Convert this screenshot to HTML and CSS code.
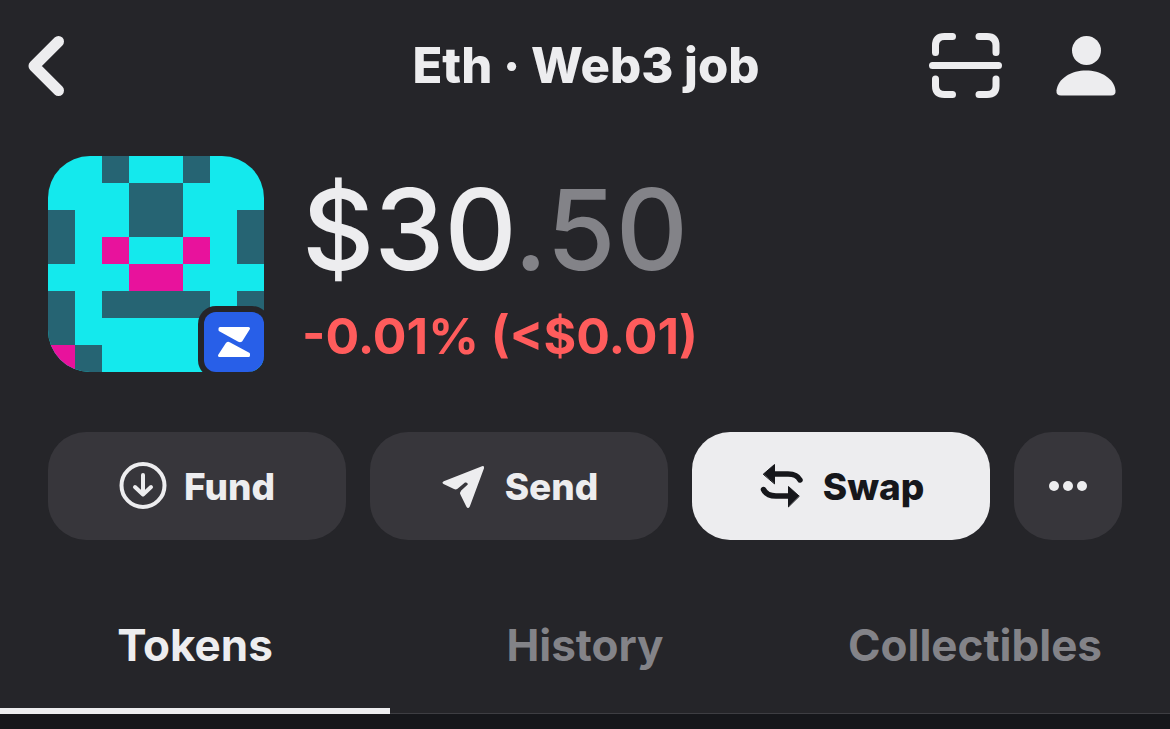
FILE: index.html
```html
<!DOCTYPE html>
<html lang="en">
<head>
    <meta charset="UTF-8">
    <meta name="viewport" content="width=device-width, initial-scale=1.0">
    <title>Eth · Web3 job</title>
    <link rel="stylesheet" href="styles.css">
</head>
<body>
    <main class="wallet">
        <header class="topbar">
            <button type="button" class="icon-button" aria-label="Back">
                <svg width="36" height="60" viewBox="0 0 36 60" fill="none" stroke="currentColor" stroke-width="11" stroke-linecap="round" stroke-linejoin="round">
                    <path d="M30.500 5.500L6 30L30.500 54.500"/>
                </svg>
            </button>
            <h1>Eth · Web3 job</h1>
            <div class="topbar-actions">
                <button type="button" class="icon-button" aria-label="Scan">
                    <svg width="74" height="66" viewBox="0 0 74 66" fill="none" stroke="currentColor" stroke-width="7" stroke-linecap="round">
                        <path d="M7.500 19.500V12.500Q7.500 3.500 16.500 3.500H24.500M51 3.500H59Q68 3.500 68 12.500V19.500M7.500 46V53Q7.500 61.500 16.500 61.500H24.500M51 61.500H59Q68 61.500 68 53V46M4.500 32.500H70.500"/>
                    </svg>
                </button>
                <button type="button" class="icon-button" aria-label="Account">
                    <svg width="60" height="60" viewBox="0 0 60 60" fill="currentColor">
                        <circle cx="30.500" cy="14.500" r="14.500"/>
                        <path d="M5 59.500Q0 59.500 0.500 54.500C2 42 16 34.500 30 34.500S58 42 59.500 54.500Q60 59.500 55 59.500Z"/>
                    </svg>
                </button>
            </div>
        </header>

        <section class="account">
            <div class="avatar">
                <svg width="216" height="216" viewBox="0 0 8 8" shape-rendering="crispEdges">
                    <path fill="#14e9ed" d="M0 0H8V8H0Z"/>
                    <path fill="#266473" d="M2 0h1v1h-1zM5 0h1v1h-1zM3 1h2v2h-2zM0 2h1v2h-1zM7 2h1v2h-1zM0 5h1v2h-1zM2 5h4v1h-4zM7 5h1v1h-1zM1 7h1v1h-1z"/>
                    <path fill="#e8129c" d="M2 3h1v1h-1zM5 3h1v1h-1zM3 4h2v1h-2zM0 7h1v1h-1z"/>
                </svg>
                <span class="badge">
                    <svg width="60" height="60" viewBox="0 0 60 60" fill="#fff" stroke="#fff" stroke-width="3" stroke-linejoin="round">
                        <path d="M16 16.500H44.500L37 28.500Q36 29 35 28.500L16 18Z"/>
                        <path d="M44.500 43.500H15.500L23 32Q24 31 25 31.500L44.500 42Z"/>
                    </svg>
                </span>
            </div>
            <div class="totals">
                <p class="balance">$30<span class="cents">.50</span></p>
                <p class="change">-0.01% (&lt;$0.01)</p>
            </div>
        </section>

        <div class="actions">
            <button type="button" class="action">
                <svg width="48" height="48" viewBox="0 0 48 48" fill="none" stroke="currentColor" stroke-width="4" stroke-linecap="round" stroke-linejoin="round">
                    <circle cx="24" cy="23.500" r="21.500"/>
                    <path d="M24 13V32.500M16 25L24 32.500L32 25"/>
                </svg>
                Fund
            </button>
            <button type="button" class="action">
                <svg width="48" height="48" viewBox="0 0 48 48" fill="currentColor">
                    <path d="M3.800 19.200L42 4.200Q44.600 3.600 44 6.200L29.800 44.600Q28 47.600 26.300 44.600L20.500 32.800Q19.500 30.500 21.200 28.600L27.800 22.500Q27.800 19.900 25 20.500L17.500 26.700Q15.800 27.900 14 27L3.500 22Q1.300 20.500 3.800 19.200Z"/>
                </svg>
                Send
            </button>
            <button type="button" class="action action-primary">
                <svg width="48" height="48" viewBox="0 0 48 48" fill="none" stroke="currentColor" stroke-width="5.500" stroke-linecap="round" stroke-linejoin="round">
                    <path d="M14 12H30Q39 12 42 18M5.500 27.500Q8.500 34 18 34H33"/>
                    <path fill="currentColor" stroke-width="1" d="M5.500 12L16.500 2.500V21.500ZM41 34L30.500 24.500V44.500Z"/>
                </svg>
                Swap
            </button>
            <button type="button" class="action action-more" aria-label="More">
                <svg width="38" height="10" viewBox="0 0 38 10" fill="currentColor">
                    <circle cx="5" cy="5" r="5"/>
                    <circle cx="19" cy="5" r="5"/>
                    <circle cx="33" cy="5" r="5"/>
                </svg>
            </button>
        </div>

        <nav class="tabs">
            <a href="#tokens" class="tab active">Tokens</a>
            <a href="#history" class="tab">History</a>
            <a href="#collectibles" class="tab">Collectibles</a>
        </nav>
    </main>
</body>
</html>
```

FILE: styles.css
```css
* {
    margin: 0;
    padding: 0;
    box-sizing: border-box;
}

body {
    font-family: 'Inter', 'Liberation Sans', sans-serif;
    background-color: #16171b;
    color: #ededef;
}

button {
    border: none;
    background: none;
    color: inherit;
    font: inherit;
    cursor: pointer;
}

svg {
    display: block;
}

.wallet {
    background-color: #252529;
}

/* Top bar */
.topbar {
    display: grid;
    grid-template-columns: 1fr auto 1fr;
    align-items: center;
    height: 132px;
    padding: 0 54px 0 28px;
}

.topbar .icon-button {
    justify-self: start;
}

h1 {
    font-size: 49px;
    line-height: 60px;
    font-weight: 800;
    padding-left: 28px;
}

.topbar-actions {
    display: flex;
    align-items: center;
    justify-content: flex-end;
    gap: 54px;
}

/* Account summary */
.account {
    display: flex;
    align-items: center;
    gap: 38px;
    padding: 24px 48px 60px;
}

.avatar {
    position: relative;
    flex: none;
    border-radius: 42px 42px 16px 42px;
    overflow: hidden;
}

.badge {
    position: absolute;
    right: 0;
    bottom: 0;
    border-radius: 12px;
    background-color: #285fe8;
    box-shadow: 0 0 0 6px #252529;
}

.balance {
    font-size: 112px;
    line-height: 144px;
    font-weight: 500;
}

.cents {
    color: #838388;
}

.change {
    font-size: 50px;
    line-height: 70px;
    font-weight: 700;
    color: #ff5c5c;
}

/* Action buttons */
.actions {
    display: flex;
    gap: 24px;
    padding: 0 48px 48px;
}

.action {
    flex: 1;
    display: flex;
    align-items: center;
    justify-content: center;
    gap: 17px;
    height: 108px;
    border-radius: 38px;
    background-color: #37363b;
    font-size: 37px;
    font-weight: 800;
}

.action-primary {
    background-color: #ededef;
    color: #16171b;
}

.action-more {
    flex: 0 0 108px;
}

/* Tabs */
.tabs {
    display: grid;
    grid-template-columns: repeat(3, 1fr);
    box-shadow: inset 0 -1px #3e3e43;
}

.tab {
    padding: 27px 0 33px;
    border-bottom: 6px solid transparent;
    font-size: 44px;
    line-height: 60px;
    font-weight: 700;
    text-align: center;
    text-decoration: none;
    color: #838388;
}

.tab.active {
    border-color: #ededef;
    color: #ededef;
}
```
